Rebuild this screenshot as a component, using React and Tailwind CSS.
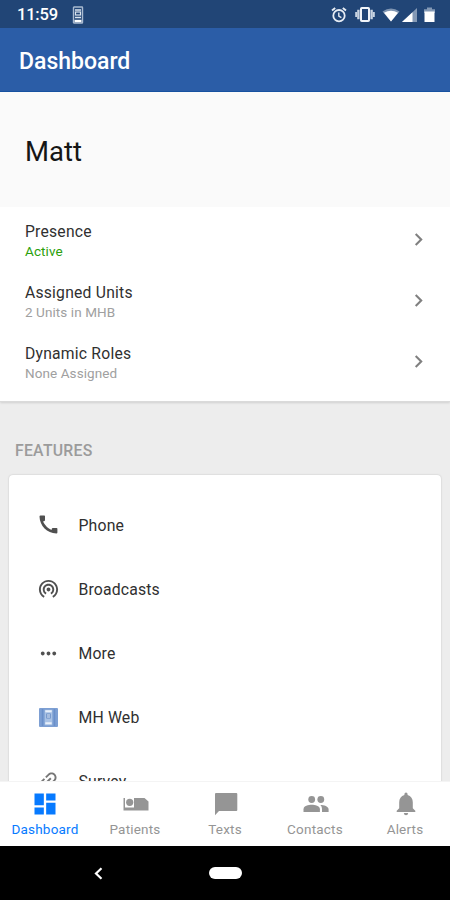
// Dashboard page
// - Status bar and app header
// - User card with presence, units and roles
// - Feature list, bottom tabs and the system navigation bar
import {
  MdChevronRight, MdWifiTethering, MdMoreHoriz, MdLink, MdDashboard,
} from 'react-icons/md';

const details = [
  { title: 'Presence', value: 'Active', color: 'text-[#2ba00b]' },
  { title: 'Assigned Units', value: '2 Units in MHB', color: 'text-[#a0a0a0]' },
  { title: 'Dynamic Roles', value: 'None Assigned', color: 'text-[#a0a0a0]' },
];

const features = [
  { label: 'Phone', icon: <PhoneIcon /> },
  { label: 'Broadcasts', icon: <MdWifiTethering size={23} className="-mt-0.5" /> },
  { label: 'More', icon: <MdMoreHoriz size={23} /> },
  { label: 'MH Web', icon: <WebIcon /> },
  { label: 'Survey', icon: <MdLink size={24} className="-rotate-45 text-[#777]" /> },
];

const tabs = [
  { label: 'Dashboard', icon: <MdDashboard size={28} />, active: true },
  { label: 'Patients', icon: <BedIcon /> },
  { label: 'Texts', icon: <ChatIcon /> },
  { label: 'Contacts', icon: <PeopleIcon /> },
  { label: 'Alerts', icon: <BellIcon /> },
];

function BadgeIcon() {
  return (
    <svg width="12" height="18" viewBox="0 0 12 18" fill="none">
      <rect x="1.5" y="1" width="9" height="16" rx="0.5" stroke="#a9bad0" strokeWidth="1.4" />
      <path d="M3 4h6M3 11.5h6" stroke="#dce5ef" strokeWidth="1.3" />
      <rect x="3.5" y="6" width="5" height="3" stroke="#dce5ef" strokeWidth="1.2" />
      <path d="M2.5 15h7" stroke="#fff" strokeWidth="2.4" />
    </svg>
  );
}

function AlarmIcon() {
  return (
    <svg width="16" height="16" viewBox="0 0 16 16" fill="none" stroke="#e6ecf4">
      <circle cx="8" cy="8.7" r="5.7" strokeWidth="1.8" />
      <path d="M1 3.6L4.2 1M15 3.6L11.8 1" strokeWidth="1.9" />
      <path d="M7.8 5.4V9L10.4 10.6" strokeWidth="1.4" />
    </svg>
  );
}

function VibrateIcon() {
  return (
    <svg className="ml-2" width="20" height="15" viewBox="0 0 20 15" fill="none">
      <rect x="6" y="1" width="8" height="13" rx="0.8" stroke="#f0f4f9" strokeWidth="2" />
      <path d="M3.4 2.8v9.4M16.6 2.8v9.4" stroke="#c9d4e2" strokeWidth="2.4" />
      <path d="M1.2 5v5M18.8 5v5" stroke="#c9d4e2" strokeWidth="2" />
    </svg>
  );
}

function PhoneIcon() {
  return (
    <svg width="19" height="19" viewBox="0 0 19 19" fill="currentColor" className="-mt-px">
      <path d="M0.5 1.5Q0.5 0.5 1.5 0.5H5.3Q6 0.5 6 1.3V5.3Q6 6 5 6.2L4 6.5Q7 12.5 12.5 15L12.8 13.7Q13 13 13.8 13H17.6Q18.4 13 18.4 13.8V17.4Q18.4 18.4 17.4 18.4C8 18.2 0.8 11 0.5 1.5Z" />
    </svg>
  );
}

function WebIcon() {
  return (
    <svg width="19" height="19" viewBox="0 0 19 19" fill="none">
      <rect width="19" height="19" rx="1" fill="#7d9fd3" />
      <path d="M3.5 1v17M15.5 1v17" stroke="#6a8fc9" strokeWidth="1.5" />
      <rect x="5.7" y="1.8" width="7.6" height="15.4" fill="#a9c2e5" />
      <rect x="7.3" y="5.5" width="4.4" height="5" fill="#6489c3" />
      <path d="M8 7h3M8 9h3" stroke="#e8f0fa" />
      <path d="M6.3 3.3h6.4M6.3 15.2h6.4" stroke="#e8f0fa" strokeWidth="2" />
    </svg>
  );
}

function BedIcon() {
  return (
    <svg width="26" height="28" viewBox="0 0 26 28" fill="currentColor" className="ml-px">
      <path d="M0.5 8H2V17.4H11V8H21.5L25.5 11.5V20.4H0.5Z" />
      <circle cx="6.7" cy="12.3" r="3.6" />
    </svg>
  );
}

function ChatIcon() {
  return (
    <svg width="24" height="28" viewBox="0 0 24 28" fill="currentColor" className="ml-px">
      <path d="M2 3H22.3Q23.3 3 23.3 4V20Q23.3 21 22.3 21H5L1 25.2V4Q1 3 2 3Z" />
    </svg>
  );
}

function PeopleIcon() {
  return (
    <svg width="26" height="28" viewBox="0 0 26 28" fill="currentColor" className="ml-px">
      <circle cx="8.7" cy="9.5" r="3.4" />
      <circle cx="17.8" cy="9.5" r="3.4" />
      <path d="M0.5 22V19.2C0.5 16 5.5 14.8 8.7 14.8S16.9 16 16.9 19.2V22Z" />
      <path d="M17.3 14.9C21 15 25.6 16.2 25.6 19.2V22H19V19.2C19 17.3 18.5 16 17.3 14.9Z" />
    </svg>
  );
}

function BellIcon() {
  return (
    <svg width="20" height="28" viewBox="0 0 20 28" fill="currentColor" className="ml-px">
      <path d="M8.4 4.2Q8.4 2.6 10 2.6T11.6 4.2V5C15 5.9 16.8 8.8 16.8 12.3V18.3L19.3 20.8V22H0.7V20.8L3.2 18.3V12.3C3.2 8.8 5 5.9 8.4 5Z" />
      <path d="M7.8 23H12.2Q12 25.3 10 25.3T7.8 23Z" />
    </svg>
  );
}

function StatusBar() {
  return (
    <div className="h-7 shrink-0 bg-[#214576] flex items-center text-white pl-[17px] pr-[15px] pt-0.5">
      <span className="text-[16.5px] font-medium leading-6 w-[55px] tracking-[-0.2px]">11:59</span>
      <BadgeIcon />
      <div className="ml-auto flex items-center -mt-px">
        <AlarmIcon />
        <VibrateIcon />
        <svg className="ml-[7px]" width="18" height="14" viewBox="0 0 18 14">
          <path d="M0.5 3.5Q9-2.5 17.5 3.5L9 13.5Z" fill="#7f95b2" />
          <path d="M2 4.7Q9 1 16 4.7L9 13.5Z" fill="#fff" />
        </svg>
        <svg className="ml-0.5" width="15" height="14" viewBox="0 0 15 14">
          <path d="M0 14L15 0V14Z" fill="#8499b5" />
          <path d="M0 14L10.5 4.2V14Z" fill="#fff" />
        </svg>
        <svg className="ml-[7px]" width="11" height="15" viewBox="0 0 11 15">
          <path d="M3 0.5h5v1.7h3V6H0V2.2h3Z" fill="#8499b5" />
          <path d="M0.5 4.5h10V15h-10Z" fill="#fff" />
        </svg>
      </div>
    </div>
  );
}

function DetailRow({ title, value, color }) {
  return (
    <div className="h-[61.3px] flex items-center justify-between pl-[25px] pr-[19px]">
      <div>
        <div className="text-[15.7px] leading-5 tracking-[0.22px] text-[#303030] pt-px">{title}</div>
        <div className={`text-[13.5px] leading-5 tracking-[0.08px] -mt-px ${color}`}>{value}</div>
      </div>
      <MdChevronRight size={25} className="text-[#808080] -mt-[3px]" />
    </div>
  );
}

function Tab({ label, icon, active }) {
  return (
    <div className={`flex-1 flex flex-col items-center pt-2 ${active ? 'text-[#077aff]' : 'text-[#959595]'}`}>
      <div className="h-7 flex items-center">{icon}</div>
      <span className="text-[13.5px] leading-4 mt-[3px] tracking-[0.2px]">{label}</span>
    </div>
  );
}

export default function App() {
  return (
    <div className="w-[450px] h-[900px] overflow-hidden flex flex-col bg-[#ededed] font-['Roboto',sans-serif]">
      <StatusBar />
      <header className="h-16 shrink-0 bg-[#2b5da7] border-b border-[#1751a0] flex items-center px-[19px]">
        <h1 className="text-[23px] font-medium text-white pt-[5px]">Dashboard</h1>
      </header>

      <main className="flex-1 min-h-0 overflow-hidden">
        <section className="h-[310px] bg-white border-b border-[#dadada] shadow-[0_1px_2px_rgba(0,0,0,0.12)]">
          <div className="h-[115px] bg-[#fafafa] flex items-center px-[25px] pt-[5px]">
            <h2 className="text-[27.5px] text-[#161616]">Matt</h2>
          </div>
          <div className="pt-[3px]">
            {details.map((d) => <DetailRow key={d.title} {...d} />)}
          </div>
        </section>

        <h3 className="h-[73px] pt-[39px] px-[15px] text-[15.8px] leading-5 tracking-[0.25px] font-medium text-[#9b9b9b]">FEATURES</h3>

        <section className="mx-[9px] h-[400px] bg-white rounded-sm pt-[18px] shadow-[0_0_2px_rgba(0,0,0,0.2)]">
          {features.map((f) => (
            <div key={f.label} className="h-16 flex items-center pl-[27px]">
              <div className="w-6 flex justify-center text-[#505050]">{f.icon}</div>
              <span className="ml-[18.5px] pt-0.5 text-[15.8px] tracking-[0.15px] text-[#303030]">{f.label}</span>
            </div>
          ))}
        </section>
      </main>

      <nav className="h-[65px] shrink-0 bg-white border-t border-[#f4f4f4] flex">
        {tabs.map((t) => <Tab key={t.label} {...t} />)}
      </nav>

      <div className="h-[54px] shrink-0 bg-black flex items-center">
        <svg className="ml-[94px]" width="9" height="13" viewBox="0 0 9 13" fill="none">
          <path d="M7.5 1.2L2 6.5L7.5 11.8" stroke="#fff" strokeWidth="2.2" />
        </svg>
        <div className="ml-[106px] w-[33px] h-3 rounded-full bg-white" />
      </div>
    </div>
  );
}
